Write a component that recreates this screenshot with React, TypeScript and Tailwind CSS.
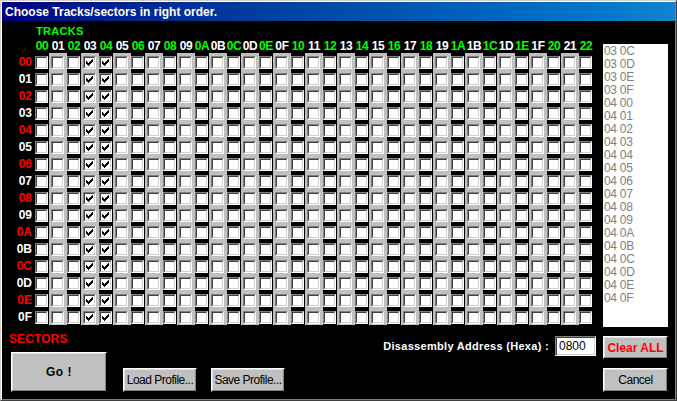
import React from 'react';

const FONT = "font-['Liberation_Sans',Arial,sans-serif]";

const COLS = Array.from({ length: 35 }, (_, i) => i.toString(16).toUpperCase().padStart(2, '0'));
const ROWS = Array.from({ length: 16 }, (_, i) => i.toString(16).toUpperCase().padStart(2, '0'));
const CHECKED_COLS = [3, 4];

const LIST_ITEMS = [
  '03 0C', '03 0D', '03 0E', '03 0F',
  ...ROWS.map(r => `04 ${r}`),
];

function Check() {
  return (
    <svg width="7" height="7" viewBox="0 0 7 7" shapeRendering="crispEdges" className="absolute left-[1px] top-[1px]">
      <path
        d="M6 0h1v1h-1z M5 1h2v1h-2z M0 2h1v1h-1z M4 2h3v1h-3z M0 3h2v1h-2z M3 3h3v1h-3z M0 4h5v1h-5z M1 5h3v1h-3z M2 6h1v1h-1z"
        fill="#000"
      />
    </svg>
  );
}

function Checkbox({ checked }: { checked: boolean }) {
  return (
    <span className="block w-[13px] h-[13px] border border-t-[#808080] border-l-[#808080] border-b-white border-r-white">
      <span className="relative block w-full h-full bg-white border border-t-[#404040] border-l-[#404040] border-b-[#d4d0c8] border-r-[#d4d0c8]">
        {checked && <Check />}
      </span>
    </span>
  );
}

function Button({ className, children }: { className: string; children: React.ReactNode }) {
  return (
    <button
      className={`flex items-center justify-center bg-[#c0c0c0] border border-t-white border-l-white border-b-black border-r-black shadow-[inset_-1px_-1px_#808080,inset_1px_1px_#dfdfdf] ${className}`}
    >
      {children}
    </button>
  );
}

export default function App() {
  return (
    <div className={`w-[677px] h-[401px] flex flex-col bg-[#d4d0c8] border border-t-[#d4d0c8] border-l-[#d4d0c8] border-b-[#404040] border-r-[#404040] ${FONT}`}>
      <div className="flex-1 flex flex-col border border-t-white border-l-white border-b-[#808080] border-r-[#808080]">
        {/* title bar */}
        <div className="h-[19px] flex items-center pl-[3px] bg-gradient-to-r from-[#000080] to-[#1084d0]">
          <span className="text-white font-bold text-[12px]">Choose Tracks/sectors in right order.</span>
        </div>

        {/* body */}
        <div className="flex-1 flex flex-col bg-black">
          <div className="flex">
            <div className="w-[592px]">
              <div className="h-[18px] pt-[3px] pl-[34px] text-[11px] leading-[14px] font-bold text-[#00ff00] tracking-[0.3px]">TRACKS</div>
              <div className="flex h-[14px] pl-[32px]">
                {COLS.map((c, i) => (
                  <div
                    key={c}
                    className={`w-[16px] text-center text-[12px] leading-[14px] font-bold tracking-[-0.3px] ${i % 2 === 0 ? 'text-[#00ff00]' : 'text-white'}`}
                  >
                    {c}
                  </div>
                ))}
              </div>
              <div className="flex">
                <div className="w-[32px] flex flex-col">
                  {ROWS.map((r, i) => (
                    <div
                      key={r}
                      className={`h-[17px] pt-[1px] pr-[2px] text-right text-[12px] leading-[17px] font-bold ${i % 2 === 0 ? 'text-[#ff0000]' : 'text-white'}`}
                    >
                      {r}
                    </div>
                  ))}
                </div>
                {COLS.map((c, ci) => (
                  <div
                    key={c}
                    className={`w-[16px] flex flex-col ${ci % 2 === 1 ? 'bg-[#c0c0c0] shadow-[-1px_0_0_#c0c0c0,1px_0_0_#c0c0c0]' : ''}`}
                  >
                    {ROWS.map(r => (
                      <div key={r} className="h-[17px] pt-[3px] pl-[1px]">
                        <Checkbox checked={CHECKED_COLS.includes(ci)} />
                      </div>
                    ))}
                  </div>
                ))}
              </div>
            </div>

            <div className="ml-[9px] mt-[23px] w-[65px] h-[283px] bg-white pl-[1px] pt-[1px]">
              {LIST_ITEMS.map(item => (
                <div key={item} className="h-[13px] text-[12px] leading-[13px] tracking-[-0.3px] text-[#808080]">
                  {item}
                </div>
              ))}
            </div>
          </div>

          {/* bottom */}
          <div className="flex items-start">
            <div className="ml-[7px] flex flex-col">
              <div className="mt-[5px] text-[12px] leading-[14px] font-bold text-[#ff0000] tracking-[0.1px]">SECTORS</div>
              <div className="mt-[6px] flex items-end">
                <Button className="ml-[2px] w-[96px] h-[40px] text-[12px] font-bold text-black tracking-[0.5px]">Go !</Button>
                <Button className="ml-[16px] w-[74px] h-[24px] text-[12px] tracking-[-0.5px] text-black">Load Profile...</Button>
                <Button className="ml-[14px] w-[74px] h-[24px] text-[12px] tracking-[-0.5px] text-black">Save Profile...</Button>
              </div>
            </div>

            <div className="ml-auto mr-[7px] mt-[9px] flex flex-col items-end">
              <div className="flex items-start">
                <span className="text-[11px] leading-[20px] font-bold text-white tracking-[0.3px]">Disassembly Address (Hexa) :</span>
                <div className="ml-[6px] w-[41px] h-[20px] bg-white border border-t-[#808080] border-l-[#808080] border-b-white border-r-white shadow-[inset_1px_1px_#404040,inset_-1px_-1px_#d4d0c8] pl-[3px] text-[12px] leading-[18px] text-black">
                  0800
                </div>
                <Button className="ml-[7px] w-[65px] h-[23px] text-[12px] font-bold text-[#ff0000]">Clear ALL</Button>
              </div>
              <Button className="mt-[9px] w-[65px] h-[24px] text-[12px] tracking-[-0.5px] text-black">Cancel</Button>
            </div>
          </div>
        </div>
      </div>
    </div>
  );
}
